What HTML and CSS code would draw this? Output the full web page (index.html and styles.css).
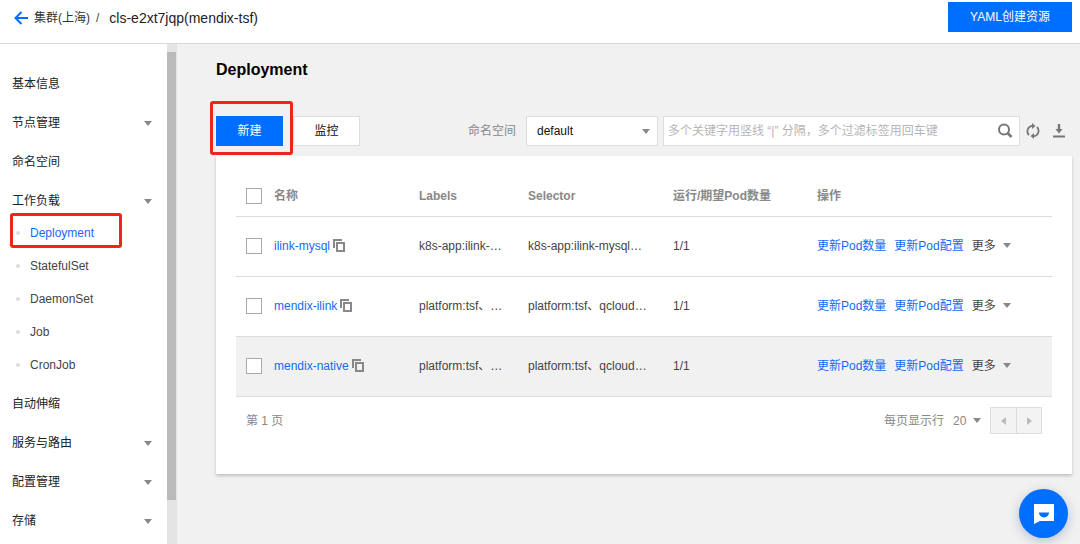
FILE: index.html
```html
<!DOCTYPE html>
<html lang="zh-CN">
<head>
<meta charset="utf-8">
<meta name="viewport" content="width=device-width, initial-scale=1">
<title>Deployment</title>
<link rel="stylesheet" href="styles.css">
</head>
<body>
<svg class="sprite" aria-hidden="true">
  <symbol id="copy" viewBox="0 0 12 13"><path d="M1 9V1h8M4 4h7v8H4z" fill="none" stroke="currentColor" stroke-width="2"/></symbol>
</svg>
<header class="topbar">
  <nav class="crumbs">
    <a class="back" href="#" aria-label="返回"><svg width="14" height="14" viewBox="0 0 14 14"><path d="M14 7H2M7.500 1L1.500 7l6 6" fill="none" stroke="currentColor" stroke-width="2"/></svg></a>
    <a class="crumb" href="#">集群(上海)</a>
    <span class="slash">/</span>
    <span class="current">cls-e2xt7jqp(mendix-tsf)</span>
  </nav>
  <button class="btn primary yaml" type="button">YAML创建资源</button>
</header>
<div class="layout">
  <aside class="sidebar">
    <nav class="menu">
      <a class="item" href="#">基本信息</a>
      <button class="item caret" type="button">节点管理</button>
      <a class="item" href="#">命名空间</a>
      <div class="group">
        <button class="item caret" type="button">工作负载</button>
        <ul class="submenu">
          <li class="marked"><a class="active" href="#">Deployment</a></li>
          <li><a href="#">StatefulSet</a></li>
          <li><a href="#">DaemonSet</a></li>
          <li><a href="#">Job</a></li>
          <li><a href="#">CronJob</a></li>
        </ul>
      </div>
      <a class="item" href="#">自动伸缩</a>
      <button class="item caret" type="button">服务与路由</button>
      <button class="item caret" type="button">配置管理</button>
      <button class="item caret" type="button">存储</button>
    </nav>
    <div class="scrollbar"><div class="thumb"></div></div>
  </aside>
  <main class="main">
    <h1>Deployment</h1>
    <div class="toolbar">
      <div class="marked create"><button class="btn primary" type="button">新建</button></div>
      <button class="btn" type="button">监控</button>
      <div class="filters">
        <label for="ns">命名空间</label>
        <span class="select caret"><select id="ns"><option>default</option></select></span>
        <div class="search">
          <input type="text" aria-label="搜索" placeholder="多个关键字用竖线 “|” 分隔，多个过滤标签用回车键">
          <button class="icon" type="button" aria-label="搜索"><svg width="16" height="16" viewBox="0 0 16 16" fill="none" stroke="currentColor" stroke-width="2"><circle cx="7" cy="6.500" r="5"/><path d="M10.500 10l4 4" stroke-width="2.500"/></svg></button>
        </div>
        <button class="icon" type="button" aria-label="刷新"><svg width="14" height="16" viewBox="0 0 14 16"><g fill="none" stroke="currentColor" stroke-width="1.800"><path d="M3 12A5.400 5.400 0 0 1 6.500 2.800"/><path d="M11 4A5.400 5.400 0 0 1 7.500 13.200"/></g><path d="M6 0l3.500 3L6 6zM8 10v6l-3.500-3z" fill="currentColor"/></svg></button>
        <button class="icon download" type="button" aria-label="下载"><svg width="12" height="14" viewBox="0 0 12 14" fill="currentColor"><path d="M4.800 0h2.400v5H9.500L6 9.500 2.500 5h2.300zM0 11.500h12v2H0z"/></svg></button>
      </div>
    </div>
    <section class="card">
      <table>
        <thead>
          <tr><th class="c-check"><input type="checkbox" aria-label="全选"></th><th class="c-name">名称</th><th class="c-labels">Labels</th><th class="c-selector">Selector</th><th class="c-pods">运行/期望Pod数量</th><th>操作</th></tr>
        </thead>
        <tbody>
          <tr>
            <td><input type="checkbox" aria-label="ilink-mysql"></td>
            <td><span class="name"><a href="#">ilink-mysql</a><button class="copy" type="button" aria-label="复制"><svg width="12" height="13"><use href="#copy"/></svg></button></span></td>
            <td>k8s-app:ilink-…</td><td>k8s-app:ilink-mysql…</td><td>1/1</td>
            <td><div class="ops"><a href="#">更新Pod数量</a><a href="#">更新Pod配置</a><button class="more caret" type="button">更多</button></div></td>
          </tr>
          <tr>
            <td><input type="checkbox" aria-label="mendix-ilink"></td>
            <td><span class="name"><a href="#">mendix-ilink</a><button class="copy" type="button" aria-label="复制"><svg width="12" height="13"><use href="#copy"/></svg></button></span></td>
            <td>platform:tsf、…</td><td>platform:tsf、qcloud…</td><td>1/1</td>
            <td><div class="ops"><a href="#">更新Pod数量</a><a href="#">更新Pod配置</a><button class="more caret" type="button">更多</button></div></td>
          </tr>
          <tr class="hover">
            <td><input type="checkbox" aria-label="mendix-native"></td>
            <td><span class="name"><a href="#">mendix-native</a><button class="copy" type="button" aria-label="复制"><svg width="12" height="13"><use href="#copy"/></svg></button></span></td>
            <td>platform:tsf、…</td><td>platform:tsf、qcloud…</td><td>1/1</td>
            <td><div class="ops"><a href="#">更新Pod数量</a><a href="#">更新Pod配置</a><button class="more caret" type="button">更多</button></div></td>
          </tr>
        </tbody>
      </table>
      <footer class="pager">
        <span>第 1 页</span>
        <div class="paging">
          <label for="size">每页显示行</label>
          <span class="size caret"><select id="size"><option>20</option></select></span>
          <div class="steps">
            <button type="button" disabled aria-label="上一页"><svg width="5" height="8" viewBox="0 0 5 8"><path d="M5 0v8L0 4z" fill="currentColor"/></svg></button>
            <button type="button" disabled aria-label="下一页"><svg width="5" height="8" viewBox="0 0 5 8"><path d="M0 0v8l5-4z" fill="currentColor"/></svg></button>
          </div>
        </div>
      </footer>
    </section>
  </main>
</div>
<button class="chat" type="button" aria-label="在线咨询"><svg width="22" height="20" viewBox="0 0 22 20"><path d="M1 0h20v17H7l-6 3z" fill="#fff"/><path d="M6 8.500h10a5 5 0 0 1-10 0z" fill="#006eff"/></svg></button>
</body>
</html>
```

FILE: styles.css
```css
* { box-sizing: border-box; }

body {
  margin: 0;
  height: 100vh;
  display: flex;
  flex-direction: column;
  overflow: hidden;
  background: #f1f1f1;
  color: #444;
  font: 12px/20px "Liberation Sans", Arial, "Noto Sans CJK SC", sans-serif;
}

a { color: #1868f5; text-decoration: none; }
button, input, select { font: inherit; color: inherit; margin: 0; }
button { padding: 0; border: 0; background: none; cursor: pointer; }
svg { display: block; }
.sprite { position: absolute; width: 0; height: 0; }

.caret::after {
  content: "";
  flex: none;
  border: 4px solid transparent;
  border-top: 5px solid #888;
  border-bottom: 0;
}

.marked { position: relative; }
.marked::after {
  content: "";
  position: absolute;
  border: 3px solid #ee251f;
  border-radius: 3px;
  pointer-events: none;
}

.topbar {
  flex: none;
  height: 44px;
  padding: 2px 8px 0 14px;
  display: flex;
  justify-content: space-between;
  align-items: flex-start;
  background: #fff;
  border-bottom: 1px solid #d8d8d8;
}
.crumbs { display: flex; align-items: center; height: 32px; }
.back { color: #006eff; margin-right: 6px; }
.crumb { color: #333; }
.slash { margin: 0 10px 0 6px; }
.current { font-size: 14px; color: #222; }

.btn {
  height: 30px;
  width: 67px;
  border: 1px solid #ddd;
  background: #fff;
  color: #111;
}
.btn.primary { border-color: #006eff; background: #006eff; color: #fff; }
.btn.yaml { width: 124px; }

.layout { flex: 1; min-height: 0; display: flex; }
.sidebar { flex: none; width: 177px; display: flex; overflow: hidden; background: #fff; }
.menu { flex: 1; padding: 24px 15px 0 12px; display: flex; flex-direction: column; gap: 7px; }
.item {
  display: flex;
  flex: none;
  width: 100%;
  height: 32px;
  align-items: center;
  justify-content: space-between;
  color: #222;
}
.submenu { margin: 0; padding: 0; list-style: none; display: grid; gap: 1px; }
.submenu a { display: flex; align-items: center; height: 32px; padding-left: 4px; color: #444; }
.submenu a::before { content: ""; width: 4px; height: 4px; margin-right: 10px; border-radius: 50%; background: #ddd; }
.submenu .active { color: #1868f5; }
.submenu .marked::after { inset: -4px 30px 1px -2px; }
.scrollbar { flex: none; width: 10px; padding-top: 8px; background: #e4e4e4; }
.thumb { width: 9px; height: 91%; background: #bababa; }

.main { flex: 1; min-width: 0; padding: 14px 8px 0 39px; }
h1 { margin: 0; font-size: 16px; line-height: 24px; color: #000; }
.toolbar { display: flex; align-items: center; gap: 10px; margin: 34px 0 10px; }
.create::after { inset: -15px -10px -9px -6px; }
.create .btn { display: block; }
.filters { flex: 1; display: flex; align-items: center; justify-content: flex-end; color: #888; padding-right: 7px; }
.select { display: flex; align-items: center; width: 132px; height: 30px; margin: 0 5px 0 10px; padding: 0 7px 0 0; border: 1px solid #ddd; background: #fff; }
select { appearance: none; border: 0; background: none; outline: 0; }
.select select { flex: 1; height: 28px; padding: 0 0 0 10px; color: #111; }
.search { flex: 0 1 357px; display: flex; align-items: center; height: 30px; padding: 0 6px 0 4px; margin-right: 6px; border: 1px solid #ddd; background: #fff; }
.search input { flex: 1; min-width: 0; height: 28px; padding: 0; border: 0; background: none; outline: 0; }
.search input::placeholder { color: #b5b5b5; opacity: 1; }
.icon { flex: none; color: #777; }
.download { margin-left: 13px; }

.card { padding: 20px 20px 40px; background: #fff; box-shadow: 0 2px 3px rgba(0, 0, 0, .2); }
table { width: 100%; table-layout: fixed; border-collapse: separate; border-spacing: 0; }
th, td { padding: 0 16px 0 0; text-align: left; border-bottom: 1px solid #ddd; white-space: nowrap; overflow: hidden; text-overflow: ellipsis; }
th { height: 41px; color: #888; }
td { height: 60px; padding-bottom: 2px; }
.c-check { width: 38px; }
.c-name, .c-selector { width: 145px; }
.c-labels { width: 109px; }
.c-pods { width: 144px; }
th:first-child, td:first-child { padding-left: 10px; padding-right: 0; }
th:last-child, td:last-child { padding-right: 0; }
.hover { background: #f1f1f1; }
input[type="checkbox"] { appearance: none; display: block; width: 16px; height: 16px; border: 1px solid #aaa; background: #fff; }
.name { display: flex; align-items: center; gap: 3px; }
.copy { color: #888; }
.ops { display: flex; gap: 8px; }
.more { display: flex; align-items: center; gap: 7px; }

.pager { display: flex; align-items: center; justify-content: space-between; padding: 10px 10px 0; color: #888; }
.paging { display: flex; align-items: center; gap: 9px; }
.size { display: flex; align-items: center; gap: 6px; }
.size select { padding: 0; }
.steps { display: flex; border: 1px solid #ddd; background: #f3f3f3; }
.steps button { display: grid; place-items: center; width: 25px; height: 25px; color: #bbb; }
.steps button + button { border-left: 1px solid #ddd; }

.chat {
  position: fixed;
  right: 12px;
  bottom: 6px;
  width: 49px;
  height: 49px;
  display: grid;
  place-items: center;
  border-radius: 50%;
  background: #006eff;
  box-shadow: 0 3px 12px rgba(0, 50, 120, .25);
}
```
